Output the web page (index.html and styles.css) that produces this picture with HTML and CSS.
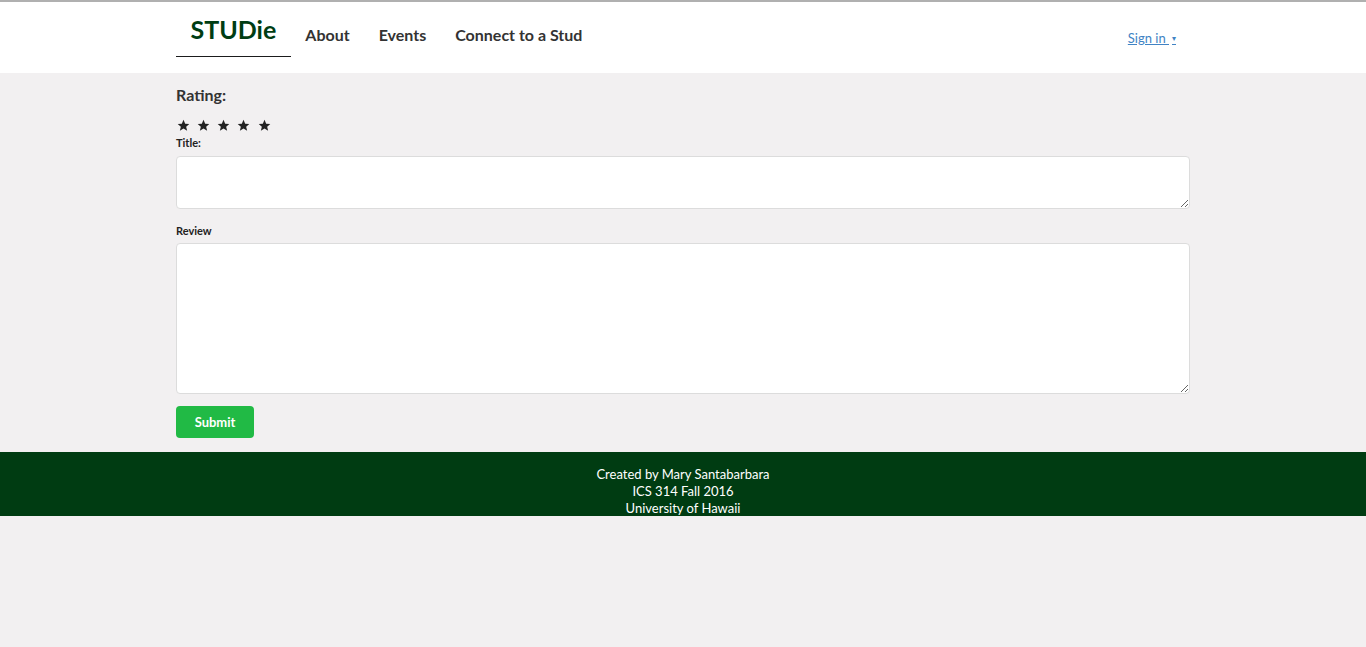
FILE: index.html
```html
<!DOCTYPE html>
<html>
<head>
<meta charset="utf-8">
<link rel="stylesheet" href="styles.css">
</head>
<body>
<div class="topbar">
  <div class="container nav">
    <a class="brand">STUDie</a>
    <a class="item">About</a>
    <a class="item">Events</a>
    <a class="item">Connect to a Stud</a>
    <div class="spacer"></div>
    <a class="signin">Sign in <span class="caret">&#9662;</span></a>
  </div>
</div>
<main class="container form">
  <div class="rating-label">Rating:</div>
  <div class="stars">
    <svg viewBox="0 0 24 24"><path d="M12 1.5l3.1 7.1 7.6.6-5.8 5 1.8 7.5L12 17.7l-6.7 4 1.8-7.5-5.8-5 7.6-.6z"/></svg>
    <svg viewBox="0 0 24 24"><path d="M12 1.5l3.1 7.1 7.6.6-5.8 5 1.8 7.5L12 17.7l-6.7 4 1.8-7.5-5.8-5 7.6-.6z"/></svg>
    <svg viewBox="0 0 24 24"><path d="M12 1.5l3.1 7.1 7.6.6-5.8 5 1.8 7.5L12 17.7l-6.7 4 1.8-7.5-5.8-5 7.6-.6z"/></svg>
    <svg viewBox="0 0 24 24"><path d="M12 1.5l3.1 7.1 7.6.6-5.8 5 1.8 7.5L12 17.7l-6.7 4 1.8-7.5-5.8-5 7.6-.6z"/></svg>
    <svg viewBox="0 0 24 24"><path d="M12 1.5l3.1 7.1 7.6.6-5.8 5 1.8 7.5L12 17.7l-6.7 4 1.8-7.5-5.8-5 7.6-.6z"/></svg>
  </div>
  <label class="lbl">Title:</label>
  <textarea class="ta ta-title"></textarea>
  <label class="lbl lbl-review">Review</label>
  <textarea class="ta ta-review"></textarea>
  <button class="submit">Submit</button>
</main>
<footer class="footer">
  <div>Created by Mary Santabarbara</div>
  <div>ICS 314 Fall 2016</div>
  <div>University of Hawaii</div>
</footer>
</body>
</html>
```
FILE: styles.css
```css
html, body { margin: 0; padding: 0; }
body {
  background: #f2f0f1;
  font-family: Lato, "Liberation Sans", sans-serif;
  color: #333;
}
.container { width: 1014px; margin: 0 auto; }
.topbar {
  background: #fff;
  border-top: 2px solid #b0b0b0;
  height: 71px;
}
.nav { display: flex; align-items: flex-start; height: 71px; }
.brand {
  font-size: 25px;
  font-weight: 700;
  color: #003d13;
  padding: 14px 14.5px 0;
  height: 40px;
  border-bottom: 1px solid #1b1c1d;
  line-height: 26px;
}
.item {
  font-size: 16px;
  font-weight: 700;
  color: #333;
  padding: 23px 14.5px 0;
  line-height: 20px;
}
.spacer { flex: 1; }
.signin {
  margin-top: 27px;
  margin-right: 14px;
  font-size: 13px;
  color: #4183c4;
  text-decoration: underline;
  line-height: 18px;
}
.caret { font-size: 8px; margin-left: 3px; vertical-align: 2px; }
.form { display: flex; flex-direction: column; align-items: flex-start; padding-top: 12px; padding-bottom: 14px; }
.rating-label { font-size: 16px; font-weight: 700; line-height: 20px; }
.stars { margin-top: 14px; display: flex; gap: 7.3px; height: 13px; color: #222; margin-left: 0.5px; }
.stars svg { width: 13px; height: 13px; fill: #222; }
.lbl { font-size: 11px; font-weight: 700; color: #222; margin-top: 4px; line-height: 14px; }
.lbl-review { margin-top: 15px; }
.ta {
  margin-top: 5px;
  width: 1014px;
  box-sizing: border-box;
  border: 1px solid #dcdcdc;
  border-radius: 4px;
  background: #fff;
  font-family: inherit;
  display: block;
}
.ta-title { height: 53px; margin-top: 6px; }
.ta-review { height: 151px; }
.submit {
  margin-top: 12px;
  width: 78px;
  height: 32px;
  border: none;
  border-radius: 4px;
  background: #21ba45;
  color: #fff;
  font-family: inherit;
  font-size: 13px;
  font-weight: 700;
  padding: 0;
}
.footer {
  background: #003c12;
  color: #fff;
  text-align: center;
  font-size: 13px;
  line-height: 17px;
  height: 64px;
  box-sizing: border-box;
  padding-top: 14px;
  overflow: hidden;
}
```
